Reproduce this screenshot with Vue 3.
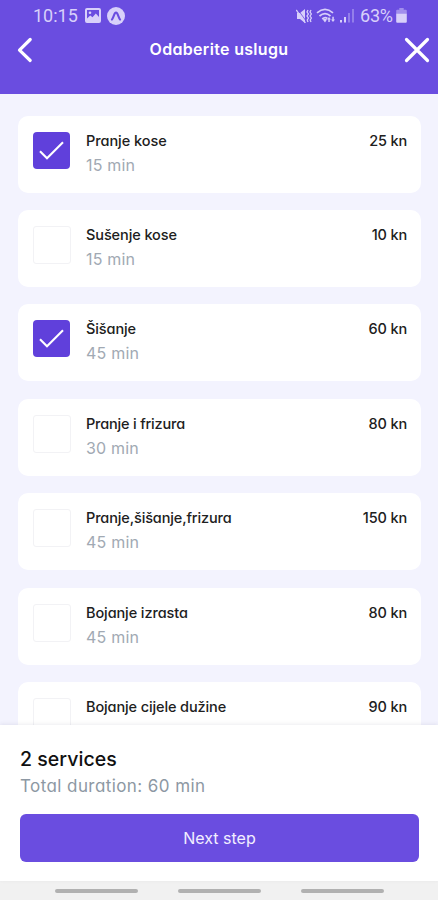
<script setup>
const services = [
  { name: 'Pranje kose', minutes: 15, price: 25, selected: true, tracking: -0.05 },
  { name: 'Sušenje kose', minutes: 15, price: 10, selected: false, tracking: -0.1 },
  { name: 'Šišanje', minutes: 45, price: 60, selected: true, tracking: -0.1 },
  { name: 'Pranje i frizura', minutes: 30, price: 80, selected: false, tracking: -0.19 },
  { name: 'Pranje,šišanje,frizura', minutes: 45, price: 150, selected: false, tracking: -0.13 },
  { name: 'Bojanje izrasta', minutes: 45, price: 80, selected: false, tracking: -0.1 },
  { name: 'Bojanje cijele dužine', minutes: null, price: 90, selected: false, tracking: -0.12 },
]
</script>

<template>
  <div class="screen">
    <header class="header">
      <div class="status">
        <span class="clock">10:15</span>
        <svg class="photo" width="16" height="15" viewBox="0 0 16 15">
          <path fill-rule="evenodd" d="M2 0h12a2 2 0 0 1 2 2v11a2 2 0 0 1-2 2H2a2 2 0 0 1-2-2V2a2 2 0 0 1 2-2ZM2 2v11h12V2Z" />
          <path d="M2 13V10.5L5.3 7.5 7.5 9.3 10.8 5.5 14 9V13Z" />
          <circle cx="5" cy="4.8" r="1.3" />
        </svg>
        <svg class="expo" width="18" height="18" viewBox="0 0 18 18">
          <circle cx="9" cy="9" r="9" />
          <path d="M4.9 12.6C6.2 11.2 6.8 8 8 6.2Q9 5 10 6.2C11.2 8 11.8 11.2 13.1 12.6" fill="none" stroke="#6a4de0" stroke-width="2.1" stroke-linecap="round" stroke-linejoin="round" />
        </svg>
        <svg class="mute" width="16" height="16" viewBox="0 0 16 16">
          <path d="M1 5h3l5-4v14l-5-4H1Z" />
          <path d="M.2 2 9.4 14.8M12 2l-1 2 1.4 2L11 8l1.4 2-1.2 2 .8 2M15 2l-1 2 1.4 2L14 8l1.4 2-1.2 2 .8 2" fill="none" stroke="currentColor" stroke-width="1.3" />
          <path d="M2 1.8 9.8 12.6" fill="none" stroke="#6a4de0" stroke-width=".8" />
        </svg>
        <svg class="wifi" width="20" height="16" viewBox="0 0 20 16">
          <path d="M1 4.8Q9 -2 17 4.8M3.5 8Q9 3.3 14.5 8M6.2 11Q9 8.7 11.4 10.5" fill="none" stroke="currentColor" stroke-width="1.7" />
          <path d="M6.7 11.6Q9 9.8 11 11.6L9 14.4ZM11 11.5 13 9l2 2.5h-1.2V14h-1.5v-2.5ZM15 11.5h1.3V8.8h1.5v2.7H19L17 14Z" />
        </svg>
        <svg class="signal" width="14" height="15" viewBox="0 0 14 15">
          <path d="M0 12h2v2.5H0ZM4 9h2v5.5H4Z" />
          <path d="M8 5h2v9.5H8ZM12 1h2v13.5h-2Z" opacity=".38" />
        </svg>
        <span class="percent">63%</span>
        <svg class="battery" width="11" height="15" viewBox="0 0 11 15">
          <path d="M3.3 0h4.4v1.8h2.1q1 0 1 1V5.5H.2V2.8q0-1 1-1h2.1Z" opacity=".5" />
          <path d="M.2 5.5h10.6v8.2q0 1-1 1H1.2q-1 0-1-1Z" />
        </svg>
      </div>
      <div class="titlebar">
        <svg width="18" height="26" viewBox="0 0 18 26">
          <path d="M14.2 2.5 3.5 13.2 14.2 23.5" class="stroke" />
        </svg>
        <h1>Odaberite uslugu</h1>
        <svg width="26" height="26" viewBox="0 0 26 26">
          <path d="M2.5 2.5 23.5 23.5M23.5 2.5 2.5 23.5" class="stroke" />
        </svg>
      </div>
    </header>

    <main class="list">
      <article v-for="service in services" :key="service.name" class="card">
        <span class="box" :class="{ checked: service.selected }">
          <svg v-if="service.selected" width="37" height="37" viewBox="0 0 37 37">
            <path d="M7 19.2 14 26.2 30 10.2" fill="none" stroke="#fff" stroke-width="2.1" />
          </svg>
        </span>
        <div class="info">
          <span class="name" :style="{ letterSpacing: service.tracking + 'px' }">{{ service.name }}</span>
          <span v-if="service.minutes" class="minutes">{{ service.minutes }} min</span>
        </div>
        <span class="price">{{ service.price }} kn</span>
      </article>
    </main>

    <footer class="summary">
      <strong>2 services</strong>
      <span class="duration">Total duration: 60 min</span>
      <button type="button">Next step</button>
    </footer>
    <nav class="system"><i></i><i></i><i></i></nav>
  </div>
</template>

<style>
body { margin: 0; }
</style>

<style scoped>
.screen {
  width: 438px;
  height: 900px;
  overflow: hidden;
  display: flex;
  flex-direction: column;
  background: #f3f3fe;
  font-family: Inter, "Liberation Sans", sans-serif;
  font-feature-settings: "cv11" 1;
}
.header {
  flex: none;
  box-sizing: border-box;
  height: 94px;
  background: #6a4de0;
  color: #fff;
}
.status {
  display: flex;
  align-items: center;
  height: 31px;
  box-sizing: border-box;
  padding: 0 31px 0 33px;
  color: #d8d0fa;
  font: 18px/31px Roboto, sans-serif;
}
.status svg { flex: none; fill: currentColor; }
.clock { width: 52px; }
.expo { margin-left: 6px; }
.mute { margin-left: auto; }
.wifi { margin-left: 4px; }
.signal { margin-left: 4px; }
.percent { margin-left: 6px; width: 35px; white-space: nowrap; letter-spacing: -.2px; }
.battery { margin-left: 1px; }
.titlebar {
  display: flex;
  align-items: center;
  justify-content: space-between;
  height: 38px;
  padding: 0 8px 0 16px;
}
.stroke { fill: none; stroke: #fff; stroke-width: 3.2; stroke-linecap: round; stroke-linejoin: round; }
h1 { margin: -2px 0 0; font-size: 16px; font-weight: 600; line-height: 24px; letter-spacing: .32px; }
.list {
  flex: 1;
  min-height: 0;
  overflow: hidden;
  box-sizing: border-box;
  padding: 21.5px 17px 0 18px;
  display: flex;
  flex-direction: column;
  gap: 17.42px;
}
.card {
  flex: none;
  box-sizing: border-box;
  height: 77px;
  padding: 16px 14px 0 15px;
  display: flex;
  align-items: flex-start;
  border-radius: 10px;
  background: #fff;
}
.box {
  box-sizing: border-box;
  width: 38px;
  height: 38px;
  border: 1px solid #f2f2f5;
  border-radius: 3px;
}
.box.checked { width: 37px; height: 37px; margin-right: 1px; border: 0; border-radius: 4px; background: #6040db; }
.box svg { display: block; }
.info { flex: 1; display: flex; flex-direction: column; margin-left: 15px; }
.name { font-size: 14.5px; font-weight: 500; line-height: 20px; margin-top: -1px; color: #202020; }
.minutes { font-size: 16px; line-height: 24px; margin-top: 2px; letter-spacing: .2px; color: #a1a9b3; }
.price { font-size: 14.5px; font-weight: 500; line-height: 20px; margin-top: -1px; letter-spacing: -.15px; color: #202020; }
.summary {
  flex: none;
  box-sizing: border-box;
  height: 156px;
  padding: 20px 19px 0 20px;
  display: flex;
  flex-direction: column;
  background: #fff;
  box-shadow: 0 -1px 4px rgba(60, 60, 90, .09);
  z-index: 1;
}
strong { font-size: 19.5px; font-weight: 500; line-height: 28px; letter-spacing: .05px; color: #101010; }
.duration { font-size: 17px; line-height: 24px; margin-top: 1px; letter-spacing: .42px; color: #8d98a3; }
button {
  margin-top: 16px;
  height: 48px;
  padding: 0;
  border: 0;
  border-radius: 6px;
  background: #6a4de0;
  color: #f2efff;
  font: inherit;
  font-size: 16px;
  font-feature-settings: inherit;
}
.system {
  flex: none;
  height: 19px;
  display: flex;
  align-items: center;
  justify-content: center;
  gap: 40px;
  background: #f1f1f1;
}
.system i { width: 83px; height: 4px; border-radius: 2px; background: #b1b1b1; }
</style>
